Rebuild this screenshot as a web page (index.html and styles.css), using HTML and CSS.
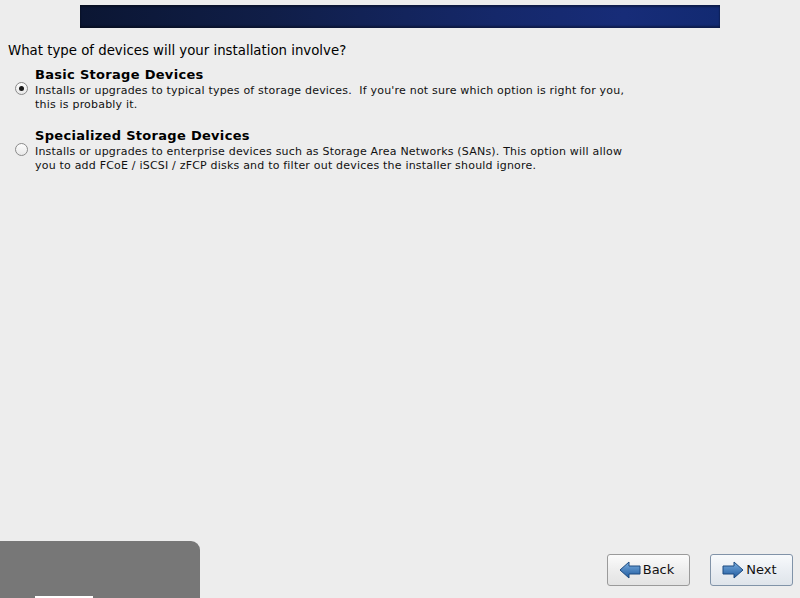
FILE: index.html
```html
<!DOCTYPE html>
<html>
<head>
<meta charset="utf-8">
<link rel="stylesheet" href="styles.css">
</head>
<body>
<div class="page">
  <div class="banner-row"><div class="banner"></div></div>
  <div class="question">What type of devices will your installation involve?</div>
  <div class="options">
    <div class="option">
      <span class="radio checked"><span class="dot"></span></span>
      <div class="opt-text">
        <div class="opt-title">Basic Storage Devices</div>
        <div class="opt-desc">Installs or upgrades to typical types of storage devices.&nbsp; If you're not sure which option is right for you,<br>this is probably it.</div>
      </div>
    </div>
    <div class="option">
      <span class="radio"></span>
      <div class="opt-text">
        <div class="opt-title">Specialized Storage Devices</div>
        <div class="opt-desc">Installs or upgrades to enterprise devices such as Storage Area Networks (SANs). This option will allow<br>you to add FCoE / iSCSI / zFCP disks and to filter out devices the installer should ignore.</div>
      </div>
    </div>
  </div>
  <div class="spacer"></div>
  <div class="bottom">
    <div class="panel"><div class="panel-tab"></div></div>
    <div class="buttons">
      <button class="btn">
        <svg width="22" height="18" viewBox="0 0 22 18"><defs><linearGradient id="ga" x1="0" y1="0" x2="0" y2="1"><stop offset="0" stop-color="#7aaee0"/><stop offset="1" stop-color="#1f5a9e"/></linearGradient></defs><path d="M1 9 L10 1 L10 5 L21 5 L21 13 L10 13 L10 17 Z" fill="url(#ga)" stroke="#1c4a80" stroke-width="1"/></svg>
        <span>Back</span>
      </button>
      <button class="btn default">
        <svg width="22" height="18" viewBox="0 0 22 18"><defs><linearGradient id="gb" x1="0" y1="0" x2="0" y2="1"><stop offset="0" stop-color="#7aaee0"/><stop offset="1" stop-color="#1f5a9e"/></linearGradient></defs><path d="M21 9 L12 1 L12 5 L1 5 L1 13 L12 13 L12 17 Z" fill="url(#gb)" stroke="#1c4a80" stroke-width="1"/></svg>
        <span>Next</span>
      </button>
    </div>
  </div>
</div>
</body>
</html>
```
FILE: styles.css
```css
html, body {
  margin: 0;
  padding: 0;
  background: #ededed;
  height: 100%;
  overflow: hidden;
}
.page {
  height: 598px;
  display: flex;
  flex-direction: column;
  font-family: "DejaVu Sans", sans-serif;
  color: #000;
}
.banner-row {
  padding: 5px 0 0 80px;
}
.banner {
  width: 640px;
  height: 23px;
  background: linear-gradient(90deg, #0b1633 0%, #101e48 30%, #15286a 65%, #172c78 85%, #122a72 100%);
  box-shadow: inset 0 2px 2px rgba(0,0,0,0.35), inset 0 -2px 2px rgba(0,0,0,0.35);
}
.question {
  font-family: "DejaVu Sans Condensed", "DejaVu Sans", sans-serif;
  font-size: 14.8px;
  padding: 13px 0 0 8px;
  line-height: 18px;
}
.options {
  display: flex;
  flex-direction: column;
  gap: 15px;
  padding: 7px 0 0 15px;
}
.option {
  display: flex;
  align-items: flex-start;
}
.radio {
  width: 11px;
  height: 11px;
  border: 1px solid #8a8a8a;
  border-radius: 50%;
  background: linear-gradient(#fdfdfd, #e8e8e8);
  margin-top: 16px;
  margin-right: 7px;
  flex: none;
  display: flex;
  align-items: center;
  justify-content: center;
}
.dot {
  width: 5px;
  height: 5px;
  border-radius: 50%;
  background: #1a1a1a;
}
.opt-title {
  font-weight: bold;
  font-size: 13px;
  line-height: 18px;
  letter-spacing: 0.3px;
}
.opt-desc {
  font-size: 11px;
  line-height: 14px;
  color: #111;
  letter-spacing: 0.2px;
}
.spacer {
  flex: 1;
}
.bottom {
  display: flex;
  justify-content: space-between;
  align-items: flex-end;
  height: 57px;
}
.panel {
  width: 200px;
  height: 57px;
  background: #777777;
  border-top-right-radius: 9px;
  position: relative;
}
.panel-tab {
  position: absolute;
  left: 35px;
  bottom: 0;
  width: 58px;
  height: 2px;
  background: #ffffff;
}
.buttons {
  display: flex;
  gap: 20px;
  padding: 0 7px 12px 0;
}
.btn {
  width: 83px;
  height: 32px;
  border: 1px solid #9a9a9a;
  border-radius: 3px;
  background: linear-gradient(#fbfbfb, #ececec 55%, #e3e3e3);
  display: flex;
  align-items: center;
  justify-content: center;
  gap: 2px;
  font-family: "DejaVu Sans", sans-serif;
  font-size: 13px;
  line-height: 16px;
  color: #111;
  padding: 0 4px 1px 0;
  margin: 0;
}
.btn.default {
  border-color: #8193a8;
  background: linear-gradient(#f8fafc, #e9edf2 55%, #dfe4ea);
}
.btn svg {
  display: block;
}
```
